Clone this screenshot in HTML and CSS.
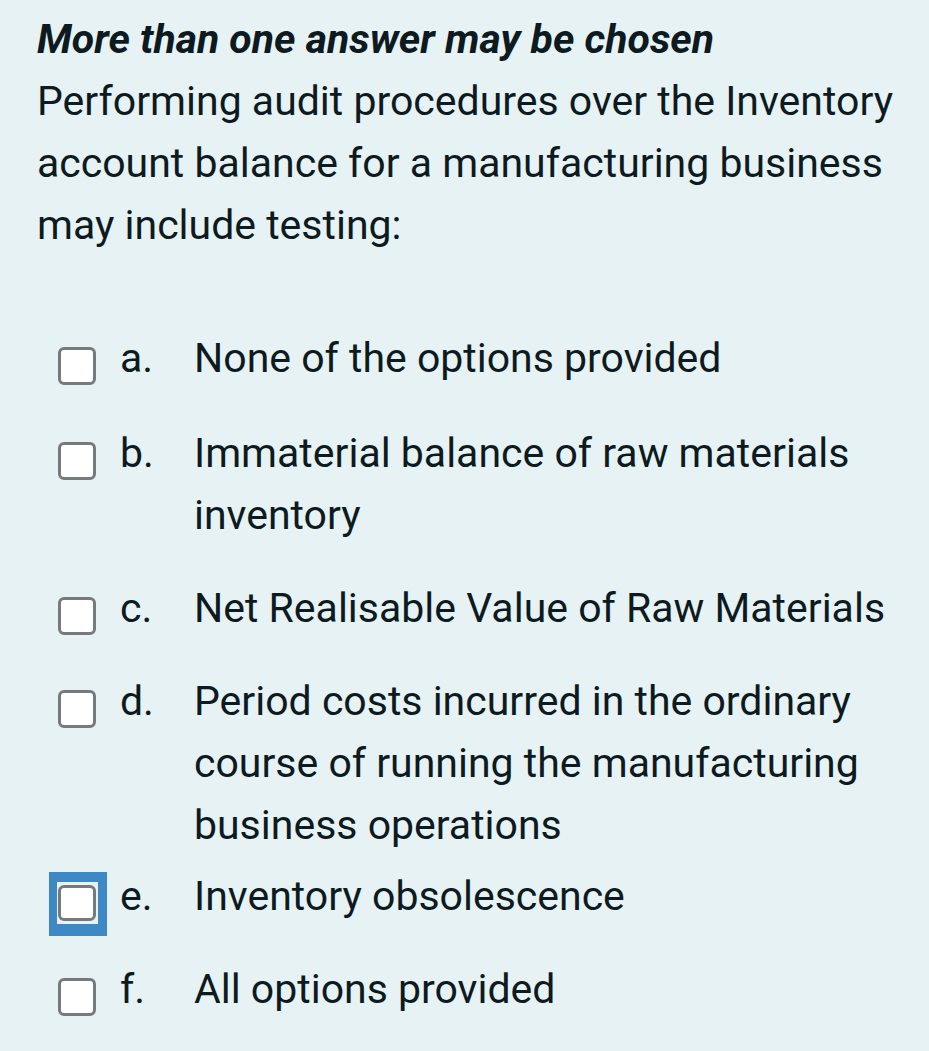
FILE: index.html
```html
<!DOCTYPE html>
<html lang="en">
<head>
<meta charset="utf-8">
<title>Question</title>
<link rel="stylesheet" href="styles.css">
</head>
<body>
<main class="question">
  <p class="hint">More than one answer may be chosen</p>
  <p class="prompt">Performing audit procedures over the Inventory account balance for a manufacturing business may include testing:</p>
  <ul class="options">
    <li class="option option-first"><span class="box"></span><span class="letter">a.</span><span class="text">None of the options provided</span></li>
    <li class="option"><span class="box"></span><span class="letter">b.</span><span class="text">Immaterial balance of raw materials inventory</span></li>
    <li class="option"><span class="box"></span><span class="letter">c.</span><span class="text">Net Realisable Value of Raw Materials</span></li>
    <li class="option"><span class="box"></span><span class="letter">d.</span><span class="text">Period costs incurred in the ordinary course of running the manufacturing business operations</span></li>
    <li class="option option-focused"><span class="focus-ring"><span class="box"></span></span><span class="letter">e.</span><span class="text">Inventory obsolescence</span></li>
    <li class="option"><span class="box"></span><span class="letter">f.</span><span class="text">All options provided</span></li>
  </ul>
</main>
</body>
</html>
```

FILE: styles.css
```css
html, body {
  margin: 0;
  padding: 0;
  background: #e7f2f5;
}
body {
  font-family: Roboto, "Liberation Sans", sans-serif;
  color: #0d1b21;
  font-size: 41px;
  line-height: 62px;
}
.question {
  padding: 8px 16px 0 37px;
}
.hint {
  margin: 0;
  font-weight: 700;
  font-style: italic;
}
.prompt {
  margin: 0;
}
.options {
  list-style: none;
  margin: 71px 0 0 0;
  padding: 0;
  display: flex;
  flex-direction: column;
  gap: 31px;
}
.option {
  display: flex;
  align-items: flex-start;
}
.option-first {
  margin-bottom: 2px;
}
.option-focused {
  margin-top: -22px;
}
.box {
  flex: 0 0 auto;
  width: 38px;
  height: 38px;
  margin-top: 20px;
  margin-left: 21px;
  box-sizing: border-box;
  background: #ffffff;
  border: 3px solid #777a7c;
  border-radius: 6px;
}
.focus-ring {
  flex: 0 0 auto;
  display: flex;
  box-sizing: border-box;
  width: 58px;
  height: 64px;
  margin: 7px -11px -9px 12px;
  padding: 3px 2px 3px 1px;
  background: #e7f2f5;
  border-style: solid;
  border-color: #3f88c6;
  border-width: 10px 9px 12px 8px;
}
.focus-ring .box {
  margin: 0;
  height: 36px;
}
.letter {
  flex: 0 0 auto;
  width: 74px;
  margin-left: 24px;
}
.text {
  flex: 1 1 auto;
}
```
